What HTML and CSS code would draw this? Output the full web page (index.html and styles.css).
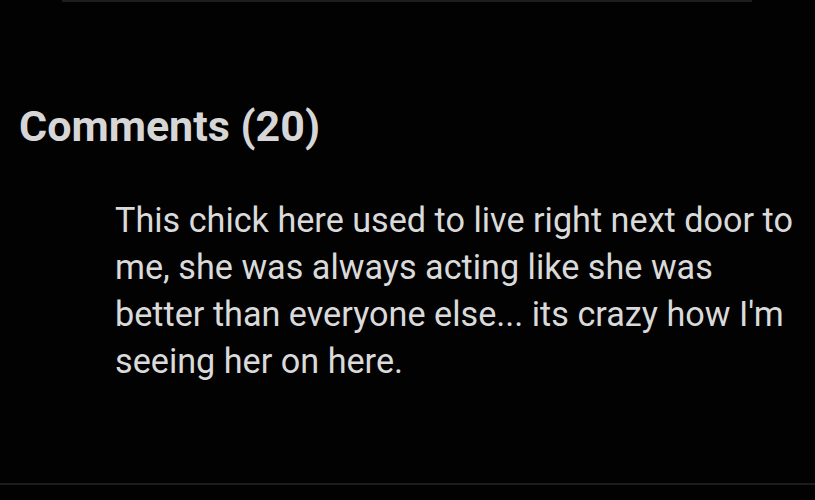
FILE: index.html
```html
<!DOCTYPE html>
<html>
<head>
<meta charset="utf-8">
<link rel="stylesheet" href="styles.css">
</head>
<body>
<div class="page">
  <div class="top-rule"></div>
  <section class="comments">
    <h2 class="comments-title">Comments (20)</h2>
    <p class="comment-text">This chick here used to live right next door to me, she was always acting like she was better than everyone else... its crazy how I'm seeing her on here.</p>
  </section>
  <div class="bottom-rule"></div>
</div>
</body>
</html>
```
FILE: styles.css
```css
html, body {
  margin: 0;
  padding: 0;
  background: #020202;
}
.page {
  width: 815px;
  height: 500px;
  overflow: hidden;
  font-family: Roboto, "Noto Sans", sans-serif;
  color: #d9d9d9;
  display: flex;
  flex-direction: column;
}
.top-rule {
  height: 2px;
  margin: 0 63px 0 62px;
  background: #1e1e1e;
}
.comments {
  flex: 1;
  padding: 0;
}
.comments-title {
  margin: 96px 0 0 19px;
  font-size: 43px;
  font-weight: 700;
  line-height: 56px;
  color: #d6d6d6;
}
.comment-text {
  margin: 43px 0 0 115px;
  width: 685px;
  font-size: 34.2px;
  font-weight: 400;
  line-height: 47px;
  color: #dadada;
}
.bottom-rule {
  height: 2px;
  margin-bottom: 15px;
  background: #1c1c1c;
}
```
